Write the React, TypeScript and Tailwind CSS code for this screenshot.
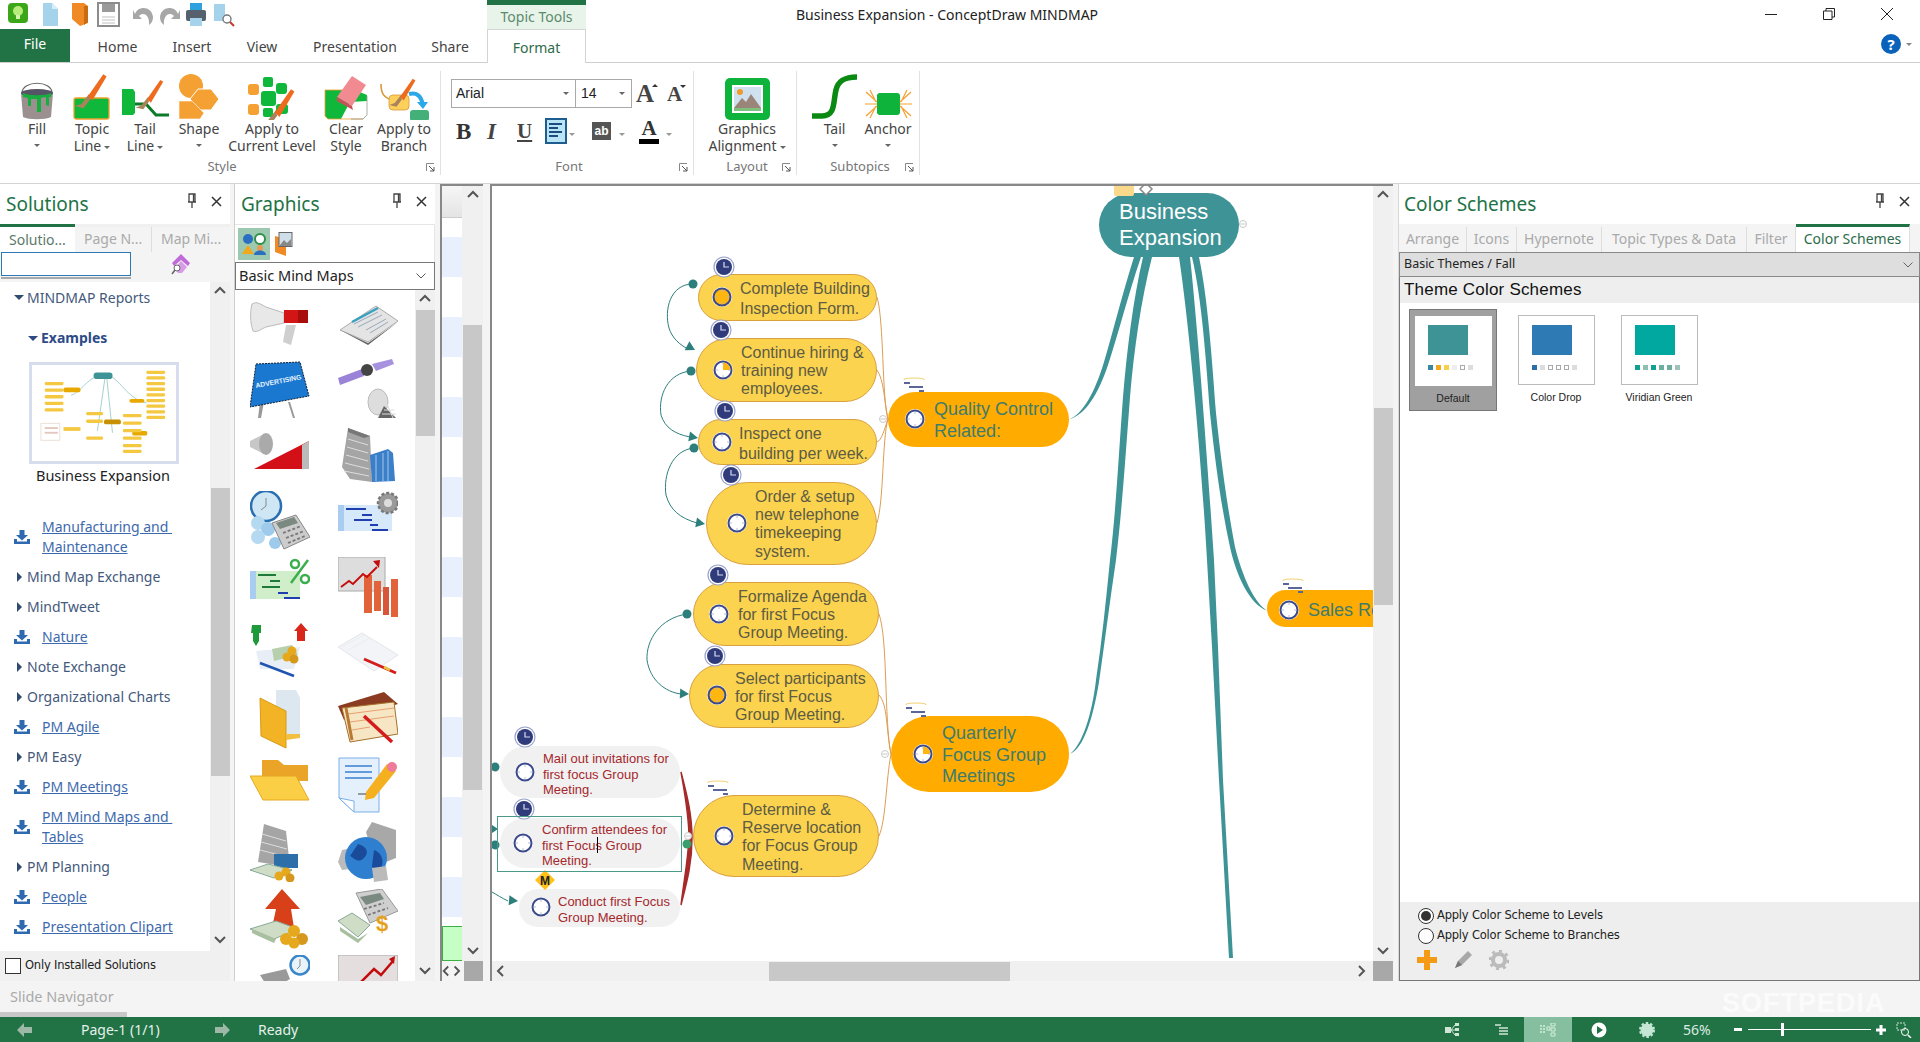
import type { ReactNode } from "react"

const ink = "text-[#444]"

// small caret under ribbon buttons
function Caret({ color = "border-t-[#666]" }: { color?: string }) {
  return <span className={`inline-block w-0 h-0 border-x-[3px] border-t-[3px] border-x-transparent ${color}`} />
}

function Chevron({ dir, className = "" }: { dir: "up" | "down" | "left" | "right"; className?: string }) {
  const d = { up: "M2 8l5-5 5 5", down: "M2 4l5 5 5-5", left: "M8 2L3 7l5 5", right: "M4 2l5 5-5 5" }[dir]
  return (
    <svg width="14" height="14" viewBox="0 0 14 14" className={className}>
      <path d={d} fill="none" stroke="#555" strokeWidth="2" />
    </svg>
  )
}

function Pin() {
  return (
    <svg width="10" height="16" viewBox="0 0 10 16">
      <path d="M2 1h6v8H2zM1 9h8M5 9v6M6.5 1v8" fill="none" stroke="#444" strokeWidth="1.3" />
    </svg>
  )
}

function CloseX() {
  return (
    <svg width="11" height="11" viewBox="0 0 11 11">
      <path d="M1 1l9 9M10 1l-9 9" stroke="#333" strokeWidth="1.5" />
    </svg>
  )
}

function Brush({ x, y, rot = 0, s = 1 }: { x: number; y: number; rot?: number; s?: number }) {
  return (
    <g transform={`translate(${x} ${y}) rotate(${rot}) scale(${s})`}>
      <path d="M0 0L-7 9l-6 2 8 2 6-8z" fill="#a9835a" />
      <path d="M-1 2L13-18l3 2L3 6z" fill="#ee6a1c" />
    </g>
  )
}

function FillIcon() {
  return (
    <svg width="36" height="42" viewBox="0 0 36 42">
      <path d="M3 15C3 2 33 2 33 15" fill="none" stroke="#666" strokeWidth="1.2" />
      <path d="M2 15h32l-2 24c-6 3-22 3-28 0z" fill="#9b8f90" />
      <ellipse cx="18" cy="15" rx="16" ry="4" fill="#556" />
      <path d="M4 15c6 3 22 3 28 0v4l-2 0v9l-3-1v-8l-5 1v14l-4 0V21l-6 0v7l-3 0v-8l-5-1z" fill="#17ad3f" />
    </svg>
  )
}

function TopicLineIcon() {
  return (
    <svg width="38" height="46" viewBox="0 0 38 46">
      <rect x="1" y="24" width="35" height="21" rx="2" fill="#0fb83a" stroke="#f0a02c" strokeWidth="1.3" />
      <Brush x={16} y={20} s={1.1} />
    </svg>
  )
}

function TailLineIcon() {
  return (
    <svg width="48" height="46" viewBox="0 0 48 46">
      <path d="M1 15h11l2 3v21l-2 2H1z" fill="#0fb83a" />
      <path d="M14 30h11l10 11h13" fill="none" stroke="#0c7a2a" strokeWidth="3" />
      <Brush x={27} y={23} s={0.95} />
    </svg>
  )
}

function ShapeIcon() {
  return (
    <svg width="42" height="46" viewBox="0 0 42 46">
      <circle cx="13" cy="12" r="12" fill="#f5a033" />
      <path d="M20 15h13l8 10-8 11H20l-8-11z" fill="#f5a033" stroke="#fff" strokeWidth="1" />
      <path d="M1 27h13l12 12-4 6H1z" fill="#f5a033" stroke="#fff" strokeWidth="0.6" />
    </svg>
  )
}

function LevelIcon() {
  return (
    <svg width="48" height="46" viewBox="0 0 48 46">
      <g fill="#0fb83a">
        <rect x="15" y="3" width="10" height="10" rx="2" />
        <rect x="28" y="9" width="11" height="11" rx="3" />
        <rect x="13" y="17" width="15" height="15" rx="3" />
        <rect x="28" y="30" width="12" height="10" rx="3" />
        <rect x="15" y="34" width="10" height="9" rx="2" />
      </g>
      <g fill="#f5a033">
        <rect x="0" y="10" width="11" height="11" rx="3" />
        <rect x="0" y="30" width="11" height="11" rx="3" />
      </g>
      <Brush x={28} y={36} s={1.15} />
    </svg>
  )
}

function ClearIcon() {
  return (
    <svg width="44" height="46" viewBox="0 0 44 46">
      <path d="M1 16h30l12 5v20l-4 4H4l-3-3z" fill="#0fb83a" />
      <path d="M17 45l9-17 17-1v14l-4 4z" fill="#fff" />
      <path d="M1 16h30M1 16v26l3 3h35" fill="none" stroke="#f0a02c" strokeWidth="0.8" />
      <path d="M43 22v19l-4 4h-12" fill="none" stroke="#999" strokeWidth="0.8" />
      <path d="M28 2l14 9-14 21-15-9z" fill="#f28a92" />
      <path d="M13 23l15 9 1 4-16-9z" fill="#c9505a" />
    </svg>
  )
}

function BranchIcon() {
  return (
    <svg width="50" height="46" viewBox="0 0 50 46">
      <path d="M2 10c0 10 3 13 10 16" fill="none" stroke="#d79a3a" strokeWidth="1.6" />
      <rect x="10" y="21" width="20" height="15" rx="4" fill="#ffcf5b" stroke="#d79a3a" strokeWidth="0.8" />
      <rect x="31" y="36" width="19" height="11" rx="3" fill="#43b07a" />
      <path d="M30 20c8-2 12 2 14 11" fill="none" stroke="#2aa8e8" strokeWidth="4" />
      <path d="M38 28l11 0-5 7z" fill="#2aa8e8" />
      <Brush x={22} y={21} s={0.9} />
    </svg>
  )
}

function GraphicsIcon() {
  return (
    <svg width="45" height="42" viewBox="0 0 45 42">
      <rect x="0" y="0" width="45" height="42" rx="5" fill="#0db33a" />
      <rect x="7" y="7" width="31" height="28" fill="#fff" />
      <rect x="9" y="9" width="27" height="24" fill="#cfe0ee" />
      <circle cx="15" cy="14" r="3" fill="#f09a28" />
      <path d="M9 30l8-10 4 4 5-8 10 14v3H9z" fill="#9b8478" />
      <rect x="9" y="30" width="27" height="3" fill="#7cc27e" />
    </svg>
  )
}

function TailIcon() {
  return (
    <svg width="46" height="46" viewBox="0 0 46 46">
      <path d="M0 42h10c14 0 11-15 14-26C26 7 32 3 45 3" fill="none" stroke="#0a8a12" strokeWidth="5.5" />
    </svg>
  )
}

function AnchorIcon() {
  return (
    <svg width="47" height="32" viewBox="0 0 47 32">
      <rect x="12" y="5" width="23" height="22" rx="3" fill="#0db33a" />
      <g stroke="#f5a033" strokeWidth="1.2" fill="none">
        <path d="M0 16h12M1 4l11 10M1 28l11-10M5 2l6 12M5 30l6-12" />
        <path d="M47 16H35M46 4L35 14M46 28L35 18M42 2l-6 12M42 30l-6-12" />
      </g>
    </svg>
  )
}

function RibbonButton({ w, icon, lines, caret }: { w: number; icon: ReactNode; lines: string[]; caret?: "inline" | "below" }) {
  return (
    <div className="flex flex-col items-center shrink-0" style={{ width: w }}>
      <div className="h-[46px] flex items-end justify-center">{icon}</div>
      <div className="text-[14px] leading-[17px] text-[#444] text-center whitespace-nowrap">
        {lines.map((l, i) => (
          <div key={i} className="h-[17px]">
            {l}
            {caret === "inline" && i === lines.length - 1 && (
              <span className="ml-[3px] align-middle inline-flex">
                <Caret />
              </span>
            )}
          </div>
        ))}
        {caret === "below" && (
          <div className="h-[17px] flex items-center justify-center">
            <Caret />
          </div>
        )}
      </div>
    </div>
  )
}

function Launcher() {
  return (
    <svg width="9" height="9" viewBox="0 0 9 9" className="absolute right-[5px] bottom-[3px]">
      <path d="M0.5 8V0.5H8" fill="none" stroke="#888" />
      <path d="M3 3l5 5M8 4v4H4" fill="none" stroke="#555" />
    </svg>
  )
}

function Group({ label, w, children, className = "" }: { label: string; w: number; children: ReactNode; className?: string }) {
  return (
    <div className="relative h-[104px] flex flex-col border-r border-[#e2e2e2] shrink-0" style={{ width: w }}>
      <div className={`flex pt-[3px] ${className}`}>{children}</div>
      <div className="mt-auto pl-[4px] text-center text-[13px] leading-[16px] text-[#777] mb-[1px]">{label}</div>
      <Launcher />
    </div>
  )
}

function TitleBar() {
  return (
    <div className="h-[29px] flex bg-white relative">
      <div className="w-[487px] shrink-0 relative flex items-start pt-[2px] pl-[8px]">
        <svg width="232" height="25" viewBox="0 0 232 25">
          <rect x="0" y="1" width="20" height="20" rx="4" fill="#3aa618" />
          <circle cx="10" cy="9" r="5" fill="#b7ec7c" />
          <rect x="8" y="13" width="4" height="4" fill="#d5f5ae" />
          <path d="M35 1h9l6 6v17H35z" fill="#a6d3ec" />
          <path d="M44 1l6 6h-6z" fill="#d8eef9" />
          <path d="M64 1h12l4 3v17l-8 3-8-7z" fill="#f08a24" />
          <path d="M76 4v19l4-3V4z" fill="#c96b12" />
          <path d="M90 1h21v23H90z" fill="#fff" stroke="#8c8c8c" strokeWidth="2" />
          <rect x="94" y="2" width="13" height="8" fill="#9a9a9a" />
          <path d="M94 15h13M94 18h13M94 21h13" stroke="#c0c0c0" />
          <path d="M127 12c3-9 17-8 18 3 0 3-1 6-4 8 1-9-5-14-10-9l3 3h-9V8z" fill="#a7a7a7" />
          <path d="M170 12c-3-9-17-8-18 3 0 3 1 6 4 8-1-9 5-14 10-9l-3 3h9V8z" fill="#a7a7a7" />
          <rect x="178" y="8" width="20" height="11" rx="2" fill="#56616d" />
          <rect x="182" y="1" width="12" height="7" fill="#2ea1de" />
          <rect x="182" y="16" width="12" height="8" fill="#a6d3ec" />
          <path d="M206 2h11v17h-11z" fill="#a6d3ec" />
          <circle cx="219" cy="17" r="4" fill="#fff" stroke="#777" strokeWidth="1.4" />
          <path d="M222 20l4 4" stroke="#c0392b" strokeWidth="2" />
        </svg>
      </div>
      <div className="w-[99px] shrink-0 flex flex-col">
        <div className="h-[5px] bg-[#217346]" />
        <div className="flex-1 bg-[#e8f3ea] text-[14px] leading-[24px] text-center text-[#5b8a6c]">Topic Tools</div>
      </div>
      <div className="w-[722px] shrink-0 text-center text-[14px] leading-[29px] text-[#222]">Business Expansion - ConceptDraw MINDMAP</div>
      <div className="flex-1 flex items-center pl-[457px] gap-[46px] -mt-[1px]">
        <svg width="12" height="12" viewBox="0 0 12 12">
          <path d="M0 6.5h12" stroke="#222" />
        </svg>
        <svg width="12" height="12" viewBox="0 0 12 12">
          <path d="M0.5 3h8.5v8.5H0.5zM3 3V0.5h8.5V9H9" fill="none" stroke="#222" />
        </svg>
        <svg width="12" height="12" viewBox="0 0 12 12">
          <path d="M0 0l12 12M12 0L0 12" stroke="#222" />
        </svg>
      </div>
    </div>
  )
}

function MenuTabs() {
  const tabs = [
    { t: "Home", x: "w-[77px] ml-[9px]" },
    { t: "Insert", x: "w-[72px]" },
    { t: "View", x: "w-[68px]" },
    { t: "Presentation", x: "w-[118px]" },
    { t: "Share", x: "w-[72px]" },
  ]
  return (
    <div className="h-[34px] flex border-b border-[#cfcfcf] bg-white">
      <div className="w-[70px] h-[33px] bg-[#217346] text-white text-[14px] leading-[30px] text-center">File</div>
      {tabs.map((t) => (
        <div key={t.t} className={`${t.x} text-center text-[14px] leading-[36px] text-[#444] h-[33px] shrink-0`}>
          {t.t}
        </div>
      ))}
      <div className="ml-[1px] w-[99px] h-[34px] border-x border-t border-[#d4d4d4] bg-white text-[14px] leading-[35px] text-center text-[#2e6b4a] shrink-0">
        Format
      </div>
      <div className="ml-auto mr-[8px] flex items-center gap-[5px] -mt-[3px]">
        <span className="w-[20px] h-[20px] rounded-full bg-[#0a62ba] text-white text-[15px] font-bold leading-[20px] text-center">?</span>
        <Caret color="border-t-[#888]" />
      </div>
    </div>
  )
}

function FontGroup() {
  return (
    <div className="relative h-[104px] w-[253px] shrink-0 border-r border-[#e2e2e2] flex flex-col font-['Liberation_Sans',sans-serif]">
      <div className="flex items-center pl-[10px] pt-[8px]">
        <div className="w-[125px] h-[29px] border border-[#a9a9a9] flex items-center justify-between pl-[4px] pr-[6px] text-[14px] text-[#222]">
          Arial
          <Caret color="border-t-[#666]" />
        </div>
        <div className="w-[56px] h-[29px] border-y border-r border-[#a9a9a9] flex items-center justify-between pl-[5px] pr-[6px] text-[14px] text-[#222]">
          14
          <Caret color="border-t-[#666]" />
        </div>
        <div className="ml-[4px] flex items-start w-[25px] font-['Liberation_Serif',serif] font-bold text-[25px] leading-[24px] text-[#444]">
          A<span className="w-0 h-0 border-x-[3px] border-b-[3px] border-x-transparent border-b-[#333] mt-[2px] -ml-[2px]" />
        </div>
        <div className="ml-[6px] flex items-start font-['Liberation_Serif',serif] font-bold text-[21px] leading-[24px] text-[#444]">
          A<span className="w-0 h-0 border-x-[3px] border-t-[3px] border-x-transparent border-t-[#333] mt-[3px] -ml-[2px]" />
        </div>
      </div>
      <div className="flex items-center h-[30px] mt-[8px] pl-[15px] font-['Liberation_Serif',serif] text-[#333]">
        <span className="w-[31px] font-bold text-[23px] leading-none">B</span>
        <span className="w-[30px] font-bold italic text-[23px] leading-none text-[#444]">I</span>
        <span className="w-[26px] font-bold text-[21px] leading-none underline underline-offset-2 text-[#444]">U</span>
        <svg width="22" height="26" viewBox="0 0 22 26" className="ml-[2px]">
          <rect x="1" y="1" width="20" height="24" fill="#b9e4f6" stroke="#1d5d8f" strokeWidth="2" />
          <path d="M4 6h13M4 10h9M4 14h13M4 18h9" stroke="#1d4d7f" strokeWidth="2" />
        </svg>
        <span className="ml-[2px]">
          <Caret color="border-t-[#999]" />
        </span>
        <span className="ml-[17px] w-[19px] h-[18px] bg-[#555] text-white text-[12px] leading-[18px] text-center font-['Liberation_Sans',sans-serif] font-bold">ab</span>
        <span className="ml-[8px]">
          <Caret color="border-t-[#999]" />
        </span>
        <span className="ml-[14px] flex flex-col items-center w-[20px]">
          <span className="font-bold text-[21px] leading-[20px] text-[#333]">A</span>
          <span className="w-[20px] h-[5px] bg-black mt-[1px]" />
        </span>
        <span className="ml-[7px]">
          <Caret color="border-t-[#999]" />
        </span>
      </div>
      <div className="mt-auto pl-[4px] text-center text-[13px] leading-[16px] text-[#777] mb-[1px] font-['Noto_Sans',sans-serif]">Font</div>
      <Launcher />
    </div>
  )
}

function Ribbon() {
  return (
    <div className="h-[121px] flex pt-[8px] bg-white border-b border-[#d4d4d4]">
      <Group label="Style" w={441} className="pl-[10px]">
        <RibbonButton w={54} icon={<FillIcon />} lines={["Fill"]} caret="below" />
        <RibbonButton w={56} icon={<TopicLineIcon />} lines={["Topic", "Line"]} caret="inline" />
        <RibbonButton w={50} icon={<TailLineIcon />} lines={["Tail", "Line"]} caret="inline" />
        <RibbonButton w={58} icon={<ShapeIcon />} lines={["Shape"]} caret="below" />
        <RibbonButton w={88} icon={<LevelIcon />} lines={["Apply to", "Current Level"]} />
        <RibbonButton w={60} icon={<ClearIcon />} lines={["Clear", "Style"]} />
        <RibbonButton w={56} icon={<BranchIcon />} lines={["Apply to", "Branch"]} />
      </Group>
      <FontGroup />
      <Group label="Layout" w={103} className="justify-center pl-[4px]">
        <RibbonButton w={96} icon={<GraphicsIcon />} lines={["Graphics", "Alignment"]} caret="inline" />
      </Group>
      <Group label="Subtopics" w={123} className="pl-[11px]">
        <RibbonButton w={53} icon={<TailIcon />} lines={["Tail"]} caret="below" />
        <RibbonButton w={54} icon={<AnchorIcon />} lines={["Anchor"]} caret="below" />
      </Group>
    </div>
  )
}

function PanelHeader({ title }: { title: string }) {
  return (
    <div className="h-[40px] flex items-center justify-between bg-white shrink-0">
      <span className="pl-[6px] text-[19px] text-[#217346] leading-[34px]">{title}</span>
      <span className="flex items-center gap-[14px] pr-[8px] -mt-[6px]">
        <Pin />
        <CloseX />
      </span>
    </div>
  )
}

function DownloadIcon() {
  return (
    <svg width="16" height="14" viewBox="0 0 16 14">
      <path d="M5.5 0h5v5H14L8 10.5 2 5h3.5z" fill="#2f6ab0" />
      <path d="M0 9h3v2.500h10V9h3v5H0z" fill="#2f6ab0" />
    </svg>
  )
}

function TreeRow({ label }: { label: string }) {
  return (
    <div className="h-[30px] flex items-center pl-[17px]">
      <span className="w-0 h-0 border-y-[5px] border-l-[5px] border-y-transparent border-l-[#2f4b6e]" />
      <span className="ml-[5px] -mt-[2px] text-[14px] text-[#44597c] whitespace-nowrap">{label}</span>
    </div>
  )
}

function LinkRow({ lines }: { lines: string[] }) {
  return (
    <div className={`flex items-center pl-[14px] ${lines.length > 1 ? "h-[50px]" : "h-[30px]"}`}>
      <DownloadIcon />
      <div className="ml-[12px] text-[14px] leading-[20px] text-[#3d69ad] whitespace-pre underline">
        {lines.map((l) => (
          <div key={l}>{l}</div>
        ))}
      </div>
    </div>
  )
}

function MapThumb() {
  const left = [26, 33, 40, 47, 54]
  const right = [14, 20, 26, 32, 38, 44, 50, 56, 62]
  return (
    <svg width="150" height="102" viewBox="0 0 150 102" className="border-[3px] border-[#d6deee] block">
      <path d="M72 12C60 10 50 30 40 32M76 14L68 70M78 14L84 72M80 12c10 0 20 25 40 28" fill="none" stroke="#9fcfca" strokeWidth="1" />
      <rect x="64" y="8" width="20" height="7" rx="3" fill="#3e9396" />
      {left.map((y) => (
        <rect key={y} x="12" y={y - 8} width="20" height="3.500" rx="1.500" fill="#f5c842" />
      ))}
      <rect x="32" y="24" width="18" height="5" rx="2" fill="#e8a800" />
      <rect x="102" y="36" width="16" height="4" rx="2" fill="#e8a800" />
      {right.map((y) => (
        <rect key={y} x="120" y={y - 8} width="20" height="3.500" rx="1.500" fill="#f5c842" />
      ))}
      {[50, 58, 76].map((y) => (
        <rect key={y} x="56" y={y} width="18" height="3.500" rx="1.500" fill="#f5c842" />
      ))}
      <rect x="75" y="58" width="18" height="5" rx="2" fill="#c88f00" />
      <rect x="105" y="70" width="16" height="5" rx="2" fill="#e8a800" />
      {[52, 60, 68, 76, 84, 90].map((y) => (
        <rect key={y} x="95" y={y} width="20" height="3.500" rx="1.500" fill="#f5c842" />
      ))}
      <rect x="8" y="62" width="20" height="18" fill="#fff" stroke="#eadfd5" />
      <rect x="12" y="66" width="14" height="2" fill="#e6c7c0" />
      <rect x="12" y="71" width="14" height="2" fill="#e6c7c0" />
      <rect x="32" y="66" width="18" height="4" fill="#f5c842" />
    </svg>
  )
}

function SolutionsPanel() {
  return (
    <div className="w-[230px] shrink-0 flex flex-col bg-[#f0f0f0]">
      <PanelHeader title="Solutions" />
      <div className="h-[28px] flex bg-[#f0f0f0] text-[14px] leading-[26px] text-[#aaa] shrink-0">
        <div className="w-[75px] border-t-[3px] border-[#217346] bg-white text-[#5a7a6a] pl-[9px] leading-[25px] border-r-0">Solutio...</div>
        <div className="w-[77px] pl-[9px] border-r border-[#ddd] bg-[#f4f4f4] mt-[3px] leading-[23px]">Page N...</div>
        <div className="flex-1 pl-[9px] bg-[#f4f4f4] mt-[3px] leading-[23px]">Map Mi...</div>
      </div>
      <div className="h-[30px] flex bg-[#f4f4f4] shrink-0">
        <div className="w-[130px] h-[27px] ml-[1px] shrink-0 border-b-2 border-[#aaa]">
          <div className="h-[24px] border border-[#2b7ab5] bg-white" />
        </div>
        <svg width="20" height="22" viewBox="0 0 20 22" className="ml-[40px] mt-[1px]">
          <path d="M10 1l9 9-2 3-7-6-7 6-2-3z" fill="#c06bd8" />
          <path d="M10 8l6 6-5 6H7l-3-5z" fill="#d79ce6" />
          <circle cx="6" cy="15" r="3" fill="#fff" stroke="#666" />
          <path d="M4 17l-3 4" stroke="#666" strokeWidth="1.500" />
        </svg>
      </div>
      <div className="flex flex-1 min-h-0">
        <div className="w-[210px] bg-white overflow-hidden">
          <div className="h-[30px] flex items-center pl-[14px]">
            <span className="w-0 h-0 border-x-[5px] border-t-[5px] border-x-transparent border-t-[#2f4b6e]" />
            <span className="ml-[3px] text-[14px] text-[#44597c]">MINDMAP Reports</span>
          </div>
          <div className="h-[30px] mt-[11px] flex items-center pl-[28px]">
            <span className="w-0 h-0 border-x-[5px] border-t-[5px] border-x-transparent border-t-[#2f4b86]" />
            <span className="ml-[3px] -mt-[2px] text-[14px] font-bold text-[#2f4b86]">Examples</span>
          </div>
          <div className="ml-[29px] mt-[9px] w-[150px]">
            <MapThumb />
          </div>
          <div className="w-[206px] text-center text-[14.5px] leading-[20px] text-[#222] mt-[1px] mb-[1px]">Business Expansion</div>
          <div className="h-[26px]" />
          <LinkRow lines={["Manufacturing and ", "Maintenance"]} />
          <TreeRow label="Mind Map Exchange" />
          <TreeRow label="MindTweet" />
          <LinkRow lines={["Nature"]} />
          <TreeRow label="Note Exchange" />
          <TreeRow label="Organizational Charts" />
          <LinkRow lines={["PM Agile"]} />
          <TreeRow label="PM Easy" />
          <LinkRow lines={["PM Meetings"]} />
          <LinkRow lines={["PM Mind Maps and ", "Tables"]} />
          <TreeRow label="PM Planning" />
          <LinkRow lines={["People"]} />
          <LinkRow lines={["Presentation Clipart"]} />
        </div>
        <div className="w-[20px] bg-[#f0f0f0] flex flex-col items-center">
          <Chevron dir="up" className="mt-[3px]" />
          <div className="h-[183px]" />
          <div className="w-[19px] h-[288px] mt-[6px] bg-[#c8c8c8]" />
          <Chevron dir="down" className="mt-auto mb-[4px]" />
        </div>
      </div>
      <div className="h-[30px] flex items-center pl-[5px] bg-[#f0f0f0] shrink-0 font-['DejaVu_Sans',sans-serif] text-[11.5px] text-[#222] tracking-[-0.2px]">
        <span className="w-[16px] h-[16px] border border-[#333] bg-white" />
        <span className="ml-[4px]">Only Installed Solutions</span>
      </div>
    </div>
  )
}

const clipArt: ReactNode[] = [
  // megaphone
  <g key="a">
    <path d="M2 12c5-3 8 0 14 3l18 6v10l-18 4c-5 2-9 6-13 4C0 30 0 20 2 12z" fill="#e8e8e8" stroke="#bbb" />
    <path d="M34 18h24v13H34z" fill="#d31515" />
    <path d="M48 18h10v13H48z" fill="#a80e0e" />
    <path d="M36 33h10l-5 20-8-3z" fill="#cfcfcf" />
  </g>,
  // newspaper
  <g key="b">
    <path d="M2 38L38 14l22 15-30 21z" fill="#e4e4e4" stroke="#aaa" />
    <path d="M2 38l28 13 30-21-30 23z" fill="#666" />
    <path d="M16 32l24-12M20 35l24-12M28 38l20-11M32 41l18-11" stroke="#9ab" strokeWidth="1" />
    <path d="M14 30l26-14" stroke="#3aa0c0" strokeWidth="2.500" />
  </g>,
  // sign
  <g key="c">
    <path d="M40 44l5 16h-2L38 44zM10 44l-2 16h3l3-16z" fill="#999" />
    <path d="M6 6l44-2 9 34-59 11z" fill="#1b78d0" stroke="#123" strokeDasharray="2 1" />
    <text x="6" y="30" fontSize="6.800" fill="#e6f3ff" fontFamily="Liberation Sans" fontWeight="700" transform="rotate(-11 6 30)">ADVERTISING</text>
  </g>,
  // satellite and dish
  <g key="d">
    <path d="M0 20l24-9 2 7-24 9z" fill="#9a82d6" />
    <path d="M34 6l20-5 2 5-18 7z" fill="#a792e0" />
    <circle cx="29" cy="12" r="6" fill="#444" />
    <ellipse cx="40" cy="44" rx="10" ry="13" fill="#ddd" stroke="#bbb" />
    <path d="M46 48l-6 12h18z" fill="#666" />
    <path d="M46 52h10M44 56h14M49 46l6 14" stroke="#ddd" />
  </g>,
  // horn and wedge
  <g key="e">
    <path d="M0 16l14-7v20L0 22z" fill="#c7c7c7" />
    <ellipse cx="16" cy="19" rx="7" ry="11" fill="#aaa" />
    <path d="M4 44L59 16v28z" fill="#d31018" />
    <path d="M52 20l7-4v28h-7z" fill="#bbb" />
  </g>,
  // tower
  <g key="f">
    <path d="M4 42L10 3l22 8 2 46-22-3z" fill="#a5a5a5" />
    <path d="M10 3l22 8-6 2-16-6z" fill="#777" />
    <path d="M10 14l20 6M9 22l21 6M8 30l22 6M7 38l24 6M6 46l25 5" stroke="#ddd" />
    <path d="M32 30l18-6 5 4 2 28-23 1z" fill="#3a7fc8" />
    <path d="M38 30v26M45 28v28M50 26v30" stroke="#a6c8ec" />
  </g>,
  // clock, calculator
  <g key="g">
    <circle cx="16" cy="15" r="15" fill="#cfe6f5" stroke="#2a6fb0" strokeWidth="2.500" />
    <path d="M16 7v8l-5 4" stroke="#888" fill="none" />
    <circle cx="8" cy="32" r="7" fill="#b6d9f2" />
    <circle cx="18" cy="38" r="7" fill="#9ecaec" />
    <circle cx="8" cy="46" r="7" fill="#b6d9f2" />
    <circle cx="25" cy="52" r="6" fill="#9ecaec" />
    <path d="M22 32l24-8 14 22-26 12z" fill="#ccc" stroke="#888" />
    <path d="M26 32l18-6 4 6-18 6z" fill="#7a8a80" />
    <path d="M33 42l18-7M36 47l18-7M38 52l17-7" stroke="#777" strokeWidth="1.800" strokeDasharray="3 2" />
  </g>,
  // gantt and gear
  <g key="h">
    <rect x="0" y="14" width="54" height="26" fill="#d6e9fb" />
    <rect x="0" y="14" width="6" height="26" fill="#a8cdf0" />
    <path d="M8 18h20M24 24h10M16 29h18M32 34h8M34 39h16" stroke="#1f3fae" strokeWidth="2" />
    <circle cx="50" cy="12" r="10" fill="#9a9a9a" stroke="#777" strokeWidth="2.500" strokeDasharray="3 2" />
    <circle cx="50" cy="12" r="4" fill="#ddd" />
  </g>,
  // gantt and percent
  <g key="i">
    <rect x="0" y="14" width="50" height="28" fill="#cfeec9" />
    <rect x="0" y="14" width="6" height="28" fill="#a8cdf0" />
    <path d="M8 18h18M20 24h10M12 30h18" stroke="#1f7a3a" strokeWidth="2" />
    <path d="M28 36h10M34 41h16" stroke="#1f3fae" strokeWidth="2" />
    <circle cx="45" cy="7" r="4" fill="none" stroke="#3cae4e" strokeWidth="2.500" />
    <circle cx="55" cy="22" r="4" fill="none" stroke="#3cae4e" strokeWidth="2.500" />
    <path d="M41 26L58 3" stroke="#3cae4e" strokeWidth="2.500" />
  </g>,
  // rising chart
  <g key="j">
    <rect x="0" y="0" width="47" height="34" fill="#ddd" stroke="#aaa" />
    <rect x="26" y="18" width="8" height="38" fill="#e2623a" />
    <rect x="36" y="24" width="7" height="30" fill="#e2623a" />
    <rect x="45" y="30" width="6" height="28" fill="#d9553a" />
    <rect x="53" y="22" width="7" height="38" fill="#e2623a" />
    <path d="M3 30l8-6 4 3 10-10 4 3 10-10" fill="none" stroke="#c40d0d" strokeWidth="2" />
    <path d="M35 4l7-1-1 8z" fill="#c40d0d" />
  </g>,
  // money and arrows
  <g key="k">
    <path d="M2 2h9v8h-2l0 8-3 5-3-5v-8H1z" fill="#1f9a3a" />
    <path d="M50 18h-3V8h-3l7-8 7 8h-3v10z" fill="#d8261a" />
    <path d="M6 28L50 24l-6 22-34 0z" fill="#e8eef6" />
    <path d="M22 26l20-4 6 10-24 6z" fill="#b8cfae" />
    <circle cx="42" cy="28" r="4.500" fill="#e6a81c" />
    <circle cx="37" cy="34" r="4.500" fill="#e6a81c" />
    <circle cx="44" cy="36" r="4.500" fill="#d6981c" />
    <path d="M10 40l34 13" stroke="#1f55b0" strokeWidth="2.500" />
  </g>,
  // paper and pen
  <g key="l">
    <path d="M0 24l24-14 36 22-24 16z" fill="#f2f4f7" stroke="#e2e6ea" />
    <path d="M4 24l22-12M10 27l22-12" stroke="#eaeef2" />
    <path d="M26 36l32 14" stroke="#d31c1c" strokeWidth="3" />
    <path d="M46 44l6 3" stroke="#e8c040" strokeWidth="3" />
  </g>,
  // folder with doc
  <g key="m">
    <path d="M26 0h20l4 8v36l-8 2H26z" fill="#dce7f0" />
    <path d="M10 8l26 13v37L11 46z" fill="#f2b324" stroke="#d99a18" />
    <path d="M36 44h14v4l-14 2z" fill="#f2c040" />
  </g>,
  // cheque book
  <g key="n">
    <path d="M0 16l46-14 14 12L6 30z" fill="#8a3b22" />
    <path d="M4 18l52-6 4 32L12 52z" fill="#f7e6c4" stroke="#a5702a" />
    <path d="M10 24l46-6M12 32l44-6M14 40l18-3" stroke="#e8a070" />
    <path d="M8 18l6 32" stroke="#b87a30" strokeWidth="3" />
    <path d="M26 26l28 26" stroke="#d31c1c" strokeWidth="3.500" />
  </g>,
  // open folder
  <g key="o">
    <path d="M12 4h16l6 5h24v16H12z" fill="#eaa528" />
    <path d="M0 20h46l13 24-2 0H13z" fill="#fbcf45" stroke="#e6a820" />
  </g>,
  // note and pencil
  <g key="p">
    <path d="M1 2h40v54H16L1 42z" fill="#e4f0fb" stroke="#7ab0e8" />
    <path d="M1 42l15 3v11z" fill="#fff" stroke="#7ab0e8" />
    <path d="M7 10h27M7 16h27M7 22h27" stroke="#3a7fd0" strokeWidth="1.500" />
    <path d="M28 36L49 8l9 7-22 27-9 2z" fill="#f5b020" />
    <circle cx="54" cy="11" r="5" fill="#f07a9a" />
    <path d="M20 38h8" stroke="#444" />
  </g>,
  // building and card
  <g key="q">
    <path d="M8 40L14 2l22 7 4 36z" fill="#a5a5a5" />
    <path d="M12 12l24 7M11 20l26 7M10 28l27 7" stroke="#ddd" />
    <rect x="24" y="32" width="24" height="14" fill="#2d6fa8" />
    <path d="M0 48l18-6 24 6-18 8z" fill="#cfdcc6" stroke="#8a9" />
    <circle cx="36" cy="50" r="4.500" fill="#e6a81c" />
    <circle cx="29" cy="54" r="4.500" fill="#e6a81c" />
    <circle cx="40" cy="56" r="4.500" fill="#d6981c" />
  </g>,
  // globe and towers
  <g key="r">
    <path d="M28 10L34 0l24 8v28l-20 8z" fill="#a8a8a8" />
    <path d="M0 40l4-12 10-2 6 4v16l-16 2z" fill="#bbb" />
    <circle cx="28" cy="36" r="21" fill="#2f7fd0" />
    <path d="M20 22c8 2 12 8 6 14s-10 0-14-2zM36 28c6 2 10 8 8 16s-8 6-10 0z" fill="#1a4a9a" />
    <path d="M34 46l14-2 2 14-14 2z" fill="#bbb" />
  </g>,
  // arrow and money
  <g key="s">
    <path d="M32 0l18 20h-9l3 19H22l4-19h-11z" fill="#d8401a" />
    <path d="M0 40l26-8 22 8-24 10z" fill="#cfdcc6" stroke="#8a9" />
    <path d="M2 44l22 10 2-4L2 40z" fill="#a8bfa0" />
    <circle cx="44" cy="42" r="6" fill="#e6a81c" />
    <circle cx="36" cy="50" r="6" fill="#e6a81c" />
    <circle cx="52" cy="50" r="6" fill="#d6981c" />
    <circle cx="44" cy="54" r="5.500" fill="#e6a81c" />
  </g>,
  // calculator and dollar
  <g key="t">
    <path d="M18 4L44 0l16 22-28 12z" fill="#cfcfcf" stroke="#999" />
    <path d="M22 8l20-4 4 6-18 6z" fill="#7a8a80" />
    <path d="M26 20l20-6M30 26l20-7" stroke="#777" strokeWidth="1.800" strokeDasharray="3 2" />
    <path d="M0 32l14-8 18 12-12 12z" fill="#cfdcc6" stroke="#8a9" />
    <path d="M2 42l18 12 10-10-10 6L2 38z" fill="#a8bfa0" />
    <text x="38" y="42" fontSize="22" fill="#e6a020" fontFamily="Liberation Sans" fontWeight="700">$</text>
  </g>,
  // clock and calc clipped
  <g key="u">
    <circle cx="50" cy="10" r="9.500" fill="#e8f3fa" stroke="#3a86c8" strokeWidth="2.500" />
    <path d="M50 4v7l-3 3" stroke="#888" fill="none" />
    <path d="M10 20l26-6 4 10-20 12z" fill="#999" />
  </g>,
  // chart clipped
  <g key="v">
    <rect x="0" y="0" width="60" height="40" rx="2" fill="#e4dede" stroke="#aaa" />
    <path d="M22 28l14-14 7 6 12-14" fill="none" stroke="#c40d0d" strokeWidth="2.500" />
    <path d="M51 4l6-3-1 8z" fill="#c40d0d" />
  </g>,
]

function GraphicsPanel() {
  return (
    <div className="w-[201px] shrink-0 flex flex-col bg-white border-l border-[#cfcfcf]">
      <PanelHeader title="Graphics" />
      <div className="h-[38px] flex items-start border-t border-r border-[#e6e6e6] shrink-0">
        <div className="ml-[3px] mt-[3px] w-[32px] h-[32px] bg-[#9cc9b0] flex items-center justify-center">
          <svg width="24" height="22" viewBox="0 0 24 22">
            <circle cx="6" cy="6" r="5" fill="#2b6fc0" />
            <circle cx="18" cy="6" r="5" fill="#fff" stroke="#2f8f4a" strokeWidth="2" />
            <path d="M6 12l6 9H0z" fill="#f0a81c" />
            <circle cx="18" cy="15" r="3" fill="#e89a50" />
            <path d="M12 22c0-6 12-6 12 0z" fill="#2b6fc0" />
          </svg>
        </div>
        <svg width="20" height="24" viewBox="0 0 20 24" className="ml-[3px] mt-[7px]">
          <path d="M2 4l11 3v17L2 20z" fill="#f08a24" />
          <rect x="6" y="0.500" width="13" height="14" fill="#cfdfe9" stroke="#666" />
          <path d="M7 13l4-5 3 3 4-4v7H7z" fill="#888" />
        </svg>
      </div>
      <div className="h-[28px] flex items-center justify-between border border-[#777] pl-[3px] pr-[8px] text-[14.5px] text-[#222] shrink-0 bg-white">
        Basic Mind Maps
        <svg width="10" height="6" viewBox="0 0 10 6">
          <path d="M0.5 0.500L5 5l4.500-4.500" fill="none" stroke="#555" />
        </svg>
      </div>
      <div className="flex-1 flex min-h-0">
        <div className="w-[180px] overflow-hidden pl-[15px] pt-[2px]">
          <div className="grid grid-cols-[60px_60px] gap-x-[28px] gap-y-[6.300px]">
            {clipArt.map((art, i) => (
              <svg key={i} width="60" height="60" viewBox="0 0 60 60">
                {art}
              </svg>
            ))}
          </div>
        </div>
        <div className="w-[20px] bg-[#f0f0f0] flex flex-col items-center">
          <Chevron dir="up" className="mt-[3px]" />
          <div className="w-[19px] h-[126px] mt-[3px] bg-[#c8c8c8]" />
          <Chevron dir="down" className="mt-auto mb-[3px]" />
        </div>
      </div>
    </div>
  )
}

function SlideStrip() {
  const stripes = [0, 1, 2, 3, 4, 5, 6, 7, 8]
  return (
    <div className="w-[43px] shrink-0 flex flex-col border-l-2 border-[#888] border-t-2 border-t-[#888]">
      <div className="flex-1 flex min-h-0">
        <div className="w-[21px] bg-white flex flex-col relative overflow-hidden">
          <div className="h-[32px] shrink-0 bg-gradient-to-b from-[#f6f6f6] to-[#e4e4e4] border-b border-[#ccc]" />
          <div className="h-[19px] shrink-0" />
          {stripes.map((s) => (
            <div key={s} className="h-[80px] shrink-0">
              <div className="h-[40px] bg-[#e8f0fe]" />
            </div>
          ))}
          <div className="absolute left-0 right-0 bottom-0 h-[35px] bg-[#c6ffc6] border-y border-l border-[#3cb043]" />
        </div>
        <div className="w-[22px] bg-[#f0f0f0] flex flex-col items-center">
          <Chevron dir="up" className="mt-[3px]" />
          <div className="w-[19px] h-[465px] mt-[122px] bg-[#c8c8c8]" />
          <Chevron dir="down" className="mt-auto mb-[3px]" />
        </div>
      </div>
      <div className="h-[20px] flex items-center shrink-0">
        <Chevron dir="left" className="-ml-[1px]" />
        <Chevron dir="right" className="-ml-[3px]" />
        <div className="w-[21px] h-[20px] bg-[#a8a8a8] ml-[1px]" />
      </div>
    </div>
  )
}

// diagram nodes, positions in page pixels
type Topic = {
  x: number
  y: number
  w: number
  h: number
  cx: number
  cy: number
  tx: number
  ty: number
  lines: string[]
  cls: string
  txt: string
  done?: number
}

const yellow = "bg-[#fbd34f] border border-[#d9a040]"
const yellowTxt = "text-[#5e5c42] text-[16px] leading-[18.300px]"
const yellowTxt2 = "text-[#5e5c42] text-[16px] leading-[19.500px]"
const orange = "bg-[#ffab00]"
const orangeTxt = "text-[#3e7c6e] text-[18px] leading-[21.500px]"
const grey = "bg-[#f1f1f1]"
const redTxt = "text-[#a5282c] text-[13px] leading-[15.500px]"

const topics: Topic[] = [
  { x: 698, y: 274, w: 179, h: 47, cx: 722, cy: 297, tx: 740, ty: 289, lines: ["Complete Building", "Inspection Form."], cls: yellow, txt: yellowTxt2, done: 1 },
  { x: 696, y: 338, w: 181, h: 64, cx: 723, cy: 370, tx: 741, ty: 353, lines: ["Continue hiring &", "training new", "employees."], cls: yellow, txt: yellowTxt, done: 0.25 },
  { x: 698, y: 419, w: 179, h: 46, cx: 722, cy: 442, tx: 739, ty: 434, lines: ["Inspect one", "building per week."], cls: yellow, txt: yellowTxt2 },
  { x: 706, y: 482, w: 171, h: 83, cx: 737, cy: 523, tx: 755, ty: 497, lines: ["Order & setup", "new telephone", "timekeeping", "system."], cls: yellow, txt: yellowTxt },
  { x: 693, y: 582, w: 186, h: 64, cx: 719, cy: 614, tx: 738, ty: 597, lines: ["Formalize Agenda", "for first Focus", "Group Meeting."], cls: yellow, txt: yellowTxt },
  { x: 689, y: 664, w: 190, h: 64, cx: 717, cy: 695, tx: 735, ty: 679, lines: ["Select participants", "for first Focus", "Group Meeting."], cls: yellow, txt: yellowTxt, done: 1 },
  { x: 693, y: 795, w: 186, h: 82, cx: 724, cy: 836, tx: 742, ty: 810, lines: ["Determine &", "Reserve location", "for Focus Group", "Meeting."], cls: yellow, txt: yellowTxt },
  { x: 500, y: 746, w: 180, h: 52, cx: 525, cy: 772, tx: 543, ty: 759, lines: ["Mail out invitations for", "first focus Group", "Meeting."], cls: grey, txt: redTxt },
  { x: 500, y: 818, w: 180, h: 50, cx: 523, cy: 843, tx: 542, ty: 830, lines: ["Confirm attendees for", "first Focus Group", "Meeting."], cls: grey, txt: redTxt },
  { x: 519, y: 889, w: 161, h: 38, cx: 541, cy: 907, tx: 558, ty: 902, lines: ["Conduct first Focus", "Group Meeting."], cls: grey, txt: redTxt },
  { x: 888, y: 392, w: 181, h: 55, cx: 915, cy: 419, tx: 934, ty: 410, lines: ["Quality Control", "Related:"], cls: orange, txt: orangeTxt },
  { x: 891, y: 716, w: 178, h: 76, cx: 923, cy: 754, tx: 942, ty: 734, lines: ["Quarterly", "Focus Group", "Meetings"], cls: orange, txt: orangeTxt, done: 0.25 },
  { x: 1267, y: 590, w: 140, h: 37, cx: 1289, cy: 610, tx: 1308, ty: 611, lines: ["Sales Related:"], cls: orange, txt: orangeTxt },
  { x: 1099, y: 193, w: 140, h: 64, cx: 0, cy: 0, tx: 1119, ty: 212, lines: ["Business", "Expansion"], cls: "bg-[#3e9396]", txt: "text-white text-[22px] leading-[26px]" },
]

const X0 = 492
const Y0 = 186

function TopicNode({ t }: { t: Topic }) {
  const lh = Number(t.txt.match(/leading-\[([\d.]+)px\]/)?.[1] ?? 18)
  return (
    <>
      <div className={`absolute rounded-full ${t.cls}`} style={{ left: t.x - X0, top: t.y - Y0, width: t.w, height: t.h }} />
      <div className={`absolute whitespace-nowrap font-['Liberation_Sans',sans-serif] ${t.txt}`} style={{ left: t.tx - X0, top: t.ty - Y0 - lh / 2 }}>
        {t.lines.map((l) => (
          <div key={l}>{l}</div>
        ))}
      </div>
    </>
  )
}

function Progress({ cx, cy, done = 0 }: { cx: number; cy: number; done?: number }) {
  return (
    <g>
      <circle cx={cx} cy={cy} r="10" fill="#fff" />
      <circle cx={cx} cy={cy} r="8.500" fill={done === 1 ? "#ffb70f" : "#fff"} stroke="#3b4a8c" strokeWidth="2" />
      {done === 0.25 && <path d={`M${cx} ${cy}V${cy - 7.500}A7.500 7.500 0 0 1 ${cx + 7.500} ${cy}z`} fill="#ffb70f" />}
      <g fill="#aeb6d6">
        <circle cx={cx} cy={cy - 6} r="0.800" />
        <circle cx={cx} cy={cy + 6} r="0.800" />
        <circle cx={cx - 6} cy={cy} r="0.800" />
        <circle cx={cx + 6} cy={cy} r="0.800" />
      </g>
    </g>
  )
}

function Clock({ x, y }: { x: number; y: number }) {
  return (
    <g>
      <circle cx={x} cy={y} r="10" fill="#fff" stroke="#9aa3cc" strokeWidth="1.200" />
      <circle cx={x} cy={y} r="8" fill="#2f3b7a" />
      <path d={`M${x} ${y - 5}V${y}h5`} fill="none" stroke="#d8dcf0" strokeWidth="1.200" />
    </g>
  )
}

function Steps({ x, y }: { x: number; y: number }) {
  return (
    <g transform={`translate(${x} ${y})`} fill="none">
      <path d="M0 4c0-2 8-2 10-2 2 0 10 0 10 2" stroke="#f2cf70" strokeWidth="1.200" />
      <path d="M0 7h6M5 11h14M15 15h5" stroke="#5a6698" strokeWidth="1.800" />
    </g>
  )
}

function Handle({ x, y }: { x: number; y: number }) {
  return (
    <g>
      <circle cx={x} cy={y} r="3.500" fill="#fff" stroke="#c8c8c8" />
      <path d={`M${x - 2.500} ${y}h5`} stroke="#c8c8c8" />
    </g>
  )
}

function Relation({ d, dot, arrow, rot }: { d: string; dot: [number, number]; arrow: [number, number]; rot: number }) {
  return (
    <g>
      <path d={d} fill="none" stroke="#2d7f7c" strokeWidth="1" />
      <circle cx={dot[0]} cy={dot[1]} r="4.500" fill="#2d7f7c" />
      <path d="M-9 -5L0 0l-9 5z" fill="#2d7f7c" transform={`translate(${arrow[0]} ${arrow[1]}) rotate(${rot})`} />
    </g>
  )
}

function MindMap() {
  return (
    <div className="flex-1 relative overflow-hidden bg-white">
      {topics.map((t) => (
        <TopicNode key={t.lines[0]} t={t} />
      ))}
      <svg className="absolute left-0 top-0" width="881" height="772" viewBox={`${X0} ${Y0} 881 772`}>
        <g fill="#3e9396">
          <path d="M1134 257h7C1128 295 1118 335 1108 365 1098 395 1085 415 1069 419.500 1083 414 1095 392 1104 362 1113 332 1122 295 1134 257Z" />
          <path d="M1143 257C1133 300 1127 350 1123 397 1119 450 1116 510 1110 560 1106 600 1102 640 1096 680 1092 715 1082 745 1070 754 1084 748 1093 718 1099 682 1105 640 1110 600 1116 560 1122 510 1126 450 1130 397 1134 350 1141 300 1152 257Z" />
          <path d="M1179 257C1190 330 1202 470 1207 560L1212 647 1219 780 1229 958h4L1223 780 1218 647 1214 560C1208 470 1198 330 1190 257Z" />
          <path d="M1192 257C1202 300 1206 360 1210 413 1216 470 1222 510 1230 547 1236 575 1250 605 1267 610.500 1254 603 1242 575 1235 547 1228 510 1222 470 1216 413 1212 360 1208 300 1199 257Z" />
        </g>
        <g fill="none" stroke="#dd9d52" strokeWidth="1">
          <path d="M888 419C882 400 884 320 877 297M888 419C884 400 884 380 877 370M888 419C884 430 882 440 877 442M888 419C882 440 884 500 877 523" />
          <path d="M891 754C884 720 888 640 879 614M891 754C886 730 888 705 879 695M891 754C886 780 886 820 879 836" />
        </g>
        <path d="M681 772C687 795 692 815 692 838 692 865 686 885 681 905 684 880 688 860 689 838 689 815 685 795 681 772Z" fill="#a52a2a" stroke="#a52a2a" strokeWidth="1.500" />
        <Relation d="M693 284C670 284 664 310 669 328 672 338 680 345 688 349" dot={[693, 284]} arrow={[695, 350]} rot={28} />
        <Relation d="M691 371C668 373 658 395 661 415 665 428 675 434 690 437" dot={[691, 371]} arrow={[698, 438]} rot={10} />
        <Relation d="M694 448C672 450 663 475 666 495 670 510 680 518 697 523" dot={[694, 448]} arrow={[705, 524]} rot={10} />
        <Relation d="M687 614C660 618 646 640 647 660 650 680 665 692 681 694" dot={[687, 614]} arrow={[689, 694]} rot={3} />
        <Relation d="M492 892C497 895 502 898 508 901" dot={[495, 767]} arrow={[518, 901]} rot={5} />
        <circle cx="495" cy="845" r="4.500" fill="#2d7f7c" />
        <path d="M492 825l6 4-6 4z" fill="#2d7f7c" />
        <circle cx="687" cy="844" r="4.500" fill="#3b9d6b" />
        <Handle x={883} y={419} />
        <Handle x={885} y={754} />
        <Handle x={688} y={836} />
        <Handle x={1243} y={224} />
        {[
          [724, 267],
          [721, 330],
          [725, 411],
          [731, 475],
          [718, 575],
          [715, 656],
          [525, 737],
          [524, 809],
        ].map(([x, y]) => (
          <Clock key={y} x={x} y={y} />
        ))}
        {topics
          .filter((t) => t.cx > 0)
          .map((t) => (
            <Progress key={t.lines[0]} cx={t.cx} cy={t.cy} done={t.done} />
          ))}
        <Steps x={904} y={376} />
        <Steps x={906} y={701} />
        <Steps x={708} y={779} />
        <Steps x={1283} y={577} />
        <path d="M1114 186h20v8a2 2 0 0 1-2 2h-16a2 2 0 0 1-2-2z" fill="#fbd98a" />
        <path d="M1146 183l6 6-6 6-6-6z" fill="#fff" stroke="#888" strokeWidth="1.500" />
        <path d="M545 870l10 10-10 10-10-10z" fill="#ffc21a" />
        <text x="545" y="885" textAnchor="middle" fontSize="12" fontWeight="700" fill="#222" fontFamily="Liberation Sans">
          M
        </text>
      </svg>
      <div className="absolute left-[5px] top-[630px] w-[185px] h-[56px] border border-[#4a9a8a]" />
      <div className="absolute left-[105px] top-[651px] w-px h-[16px] bg-black" />
    </div>
  )
}

function Canvas() {
  return (
    <div className="w-[903px] shrink-0 flex flex-col border-l-2 border-t-2 border-[#888]">
      <div className="flex-1 flex min-h-0">
        <MindMap />
        <div className="w-[20px] bg-[#f0f0f0] flex flex-col items-center shrink-0">
          <Chevron dir="up" className="mt-[3px]" />
          <div className="w-[19px] h-[197px] mt-[205px] bg-[#c8c8c8]" />
          <Chevron dir="down" className="mt-auto mb-[3px]" />
        </div>
      </div>
      <div className="h-[20px] flex items-center bg-[#f0f0f0] shrink-0">
        <Chevron dir="left" className="ml-[3px]" />
        <div className="w-[241px] h-[19px] ml-[260px] bg-[#c8c8c8]" />
        <Chevron dir="right" className="ml-auto mr-[4px]" />
        <div className="w-[20px] h-[20px] bg-[#a8a8a8]" />
      </div>
    </div>
  )
}

function Swatch({ name, color, dots, active }: { name: string; color: string; dots: string[]; active?: boolean }) {
  return (
    <div className={`w-[88px] h-[102px] flex flex-col items-center shrink-0 ${active ? "bg-[#a0a0a0] border border-[#777]" : ""}`}>
      <div className={`w-[77px] h-[70px] mt-[6px] bg-white pt-[9px] pl-[13px] ${active ? "" : "border border-[#bbb]"}`}>
        <div className={`w-[40px] h-[30px] ${color}`} />
        <div className="flex gap-[3px] mt-[10px]">
          {dots.map((d, i) => (
            <span key={i} className={`w-[5px] h-[5px] ${d}`} />
          ))}
        </div>
      </div>
      <div className="mt-[5px] text-[10.500px] leading-[14px] text-[#222] font-['Liberation_Sans',sans-serif]">{name}</div>
    </div>
  )
}

function ColorPanel() {
  const tabs = [
    { t: "Arrange", w: "w-[68px]" },
    { t: "Icons", w: "w-[50px]" },
    { t: "Hypernote", w: "w-[85px]" },
    { t: "Topic Types & Data", w: "w-[145px]" },
    { t: "Filter", w: "w-[49px]" },
  ]
  return (
    <div className="flex-1 min-w-0 overflow-hidden flex flex-col bg-white ml-[5px] border-l border-[#d8d8d8]">
      <div className="flex items-center justify-between h-[40px] shrink-0">
        <span className="pl-[5px] text-[19px] text-[#217346] leading-[34px]">Color Schemes</span>
        <span className="flex items-center gap-[14px] pr-[10px] -mt-[6px]">
          <Pin />
          <CloseX />
        </span>
      </div>
      <div className="h-[28px] flex bg-[#f4f4f4] shrink-0 text-[14px] text-[#aaa] leading-[27px]">
        {tabs.map((t) => (
          <div key={t.t} className={`${t.w} text-center mt-[3px] h-[25px] border-r border-[#ddd] leading-[24px] whitespace-nowrap`}>
            {t.t}
          </div>
        ))}
        <div className="w-[114px] text-center border-t-[3px] border-[#217346] bg-white text-[#2e6b4a] whitespace-nowrap leading-[24px] border-r border-r-[#ddd]">Color Schemes</div>
      </div>
      <div className="flex-1 flex flex-col border-l border-r border-b border-[#777] min-h-0">
        <div className="h-[25px] bg-[#dedede] border border-[#888] -ml-px -mr-px flex items-center justify-between pl-[4px] pr-[6px] text-[12.500px] text-[#222] shrink-0">
          Basic Themes / Fall
          <svg width="10" height="6" viewBox="0 0 10 6">
            <path d="M0.5 0.500L5 5l4.500-4.500" fill="none" stroke="#666" />
          </svg>
        </div>
        <div className="h-[26px] bg-[#eeeeee] pl-[4px] text-[17px] leading-[26px] text-[#111] font-['Liberation_Sans',sans-serif] tracking-[0.2px] shrink-0">Theme Color Schemes</div>
        <div className="flex gap-[15px] pl-[9px] pt-[6px] h-[599px] shrink-0">
          <Swatch name="Default" color="bg-[#3e9396]" dots={["bg-[#3a87a0]", "bg-[#f2a81c]", "bg-[#f5d04a]", "bg-[#eeeeee]", "border border-[#aaa]", "bg-[#dddddd]"]} active />
          <Swatch name="Color Drop" color="bg-[#2d7ab5]" dots={["bg-[#2d6ea8]", "bg-[#dddddd]", "border border-[#aaa]", "border border-[#aaa]", "border border-[#aaa]", "bg-[#dddddd]"]} />
          <Swatch name="Viridian Green" color="bg-[#00a8a0]" dots={["bg-[#12a090]", "bg-[#8fbfb0]", "bg-[#12a090]", "bg-[#6fae9f]", "bg-[#6fae9f]", "bg-[#9cc5b8]"]} />
        </div>
        <div className="flex-1 bg-[#eeeeee] pl-[18px] font-['DejaVu_Sans',sans-serif] text-[11.500px] text-[#222] tracking-[-0.2px]">
          <div className="flex items-center h-[20px] mt-[4px]">
            <span className="w-[16px] h-[16px] rounded-full border border-[#333] bg-white flex items-center justify-center">
              <span className="w-[10px] h-[10px] rounded-full bg-[#333]" />
            </span>
            <span className="ml-[3px]">Apply Color Scheme to Levels</span>
          </div>
          <div className="flex items-center h-[20px]">
            <span className="w-[16px] h-[16px] rounded-full border border-[#333] bg-white" />
            <span className="ml-[3px]">Apply Color Scheme to Branches</span>
          </div>
          <div className="flex items-center gap-[16px] mt-[4px] -ml-[1px]">
            <svg width="20" height="20" viewBox="0 0 20 20">
              <path d="M7 0h6v7h7v6h-7v7H7v-7H0V7h7z" fill="#f59a14" />
            </svg>
            <svg width="20" height="20" viewBox="0 0 20 20">
              <path d="M2 18l3-7L15 1l4 4L9 15z" fill="#a8a8a8" />
              <path d="M2 18l3-7 4 4z" fill="#777" />
            </svg>
            <svg width="20" height="20" viewBox="0 0 20 20">
              <circle cx="10" cy="10" r="6" fill="none" stroke="#bbb" strokeWidth="4" />
              <circle cx="10" cy="10" r="9" fill="none" stroke="#bbb" strokeWidth="3" strokeDasharray="3 4" />
            </svg>
          </div>
        </div>
      </div>
    </div>
  )
}

function SlideNav() {
  return (
    <div className="h-[36px] relative bg-[#f4f4f4] flex flex-col shrink-0">
      <div className="flex-1 pl-[10px] text-[14.500px] leading-[30px] text-[#aaa]">Slide Navigator</div>
      <div className="w-[127px] h-[5px] bg-[#c8c8c8]" />
      <div className="absolute left-[1722px] top-[8px] text-[27px] leading-[28px] font-bold tracking-[1px] text-white/70 font-['Liberation_Sans',sans-serif]">SOFTPEDIA</div>
    </div>
  )
}

function StatusBar() {
  return (
    <div className="h-[25px] bg-[#217346] flex items-center text-[14px] text-[#e6f0ea] shrink-0">
      <svg width="15" height="14" viewBox="0 0 15 14" className="ml-[17px]">
        <path d="M0 7l7-7v4h8v6H7v4z" fill="#9db8a7" />
      </svg>
      <span className="ml-[49px] w-[134px]">Page-1 (1/1)</span>
      <svg width="15" height="14" viewBox="0 0 15 14">
        <path d="M15 7L8 0v4H0v6h8v4z" fill="#9db8a7" />
      </svg>
      <span className="ml-[28px]">Ready</span>
      <div className="ml-auto flex items-center h-[25px]">
        <svg width="16" height="14" viewBox="0 0 16 14" className="mr-[34px]">
          <rect x="0" y="4" width="6" height="6" fill="#cfe5d6" />
          <path d="M6 7l4-5M6 7h4M6 7l4 5" stroke="#cfe5d6" />
          <rect x="10" y="0" width="4" height="3" fill="#cfe5d6" />
          <rect x="10" y="5" width="4" height="3" fill="#cfe5d6" />
          <rect x="10" y="10" width="4" height="3" fill="#cfe5d6" />
        </svg>
        <svg width="14" height="14" viewBox="0 0 14 14" className="mr-[15px]">
          <path d="M0 2h6M4 5h9M4 8h9M4 11h9" stroke="#cfe5d6" strokeWidth="1.500" />
        </svg>
        <div className="w-[48px] h-[25px] bg-[#85bf9f] flex items-center justify-center">
          <svg width="16" height="14" viewBox="0 0 16 14">
            <path d="M0 3h5M0 6h5M0 9h5" stroke="#d6f0df" strokeWidth="1.500" strokeDasharray="2 1" />
            <rect x="7" y="4" width="3" height="3" fill="none" stroke="#d6f0df" />
            <path d="M11 0h4v3h-4zM11 5h4v3h-4zM11 10h4v3h-4z" fill="none" stroke="#d6f0df" />
          </svg>
        </div>
        <svg width="16" height="16" viewBox="0 0 16 16" className="ml-[19px]">
          <circle cx="8" cy="8" r="7.500" fill="#fff" />
          <path d="M6 4l6 4-6 4z" fill="#217346" />
        </svg>
        <svg width="16" height="16" viewBox="0 0 16 16" className="ml-[32px]">
          <circle cx="8" cy="8" r="6.500" fill="#c4e6d4" />
          <circle cx="8" cy="8" r="7" fill="none" stroke="#c4e6d4" strokeWidth="2" strokeDasharray="2.500 2" />
        </svg>
        <span className="ml-[28px] w-[41px] text-[#dcebe2]">56%</span>
        <span className="w-[8px] h-[3px] bg-white ml-[10px]" />
        <div className="relative w-[123px] h-[1px] bg-white ml-[6px]">
          <span className="absolute left-[33px] -top-[6px] w-[3px] h-[13px] bg-white" />
        </div>
        <svg width="10" height="10" viewBox="0 0 10 10" className="ml-[5px]">
          <path d="M3.500 0h3v3.500H10v3H6.500V10h-3V6.500H0v-3h3.500z" fill="#fff" />
        </svg>
        <svg width="16" height="16" viewBox="0 0 16 16" className="ml-[10px] mr-[8px]">
          <rect x="1" y="1" width="8" height="7" fill="none" stroke="#cfe5d6" strokeDasharray="2 1" />
          <circle cx="9" cy="10" r="3.500" fill="none" stroke="#fff" />
          <path d="M12 13l3 3" stroke="#fff" strokeWidth="1.500" />
        </svg>
      </div>
    </div>
  )
}

export default function App() {
  return (
    <div className={`w-[1920px] h-[1042px] overflow-hidden flex flex-col bg-white font-['Noto_Sans',sans-serif] ${ink}`}>
      <TitleBar />
      <MenuTabs />
      <Ribbon />
      <div className="h-[797px] flex bg-[#f4f4f4] shrink-0 overflow-hidden">
        <SolutionsPanel />
        <div className="w-[4px] shrink-0" />
        <GraphicsPanel />
        <div className="w-[5px] shrink-0" />
        <SlideStrip />
        <div className="w-[7px] shrink-0" />
        <Canvas />
        <ColorPanel />
      </div>
      <SlideNav />
      <StatusBar />
    </div>
  )
}
